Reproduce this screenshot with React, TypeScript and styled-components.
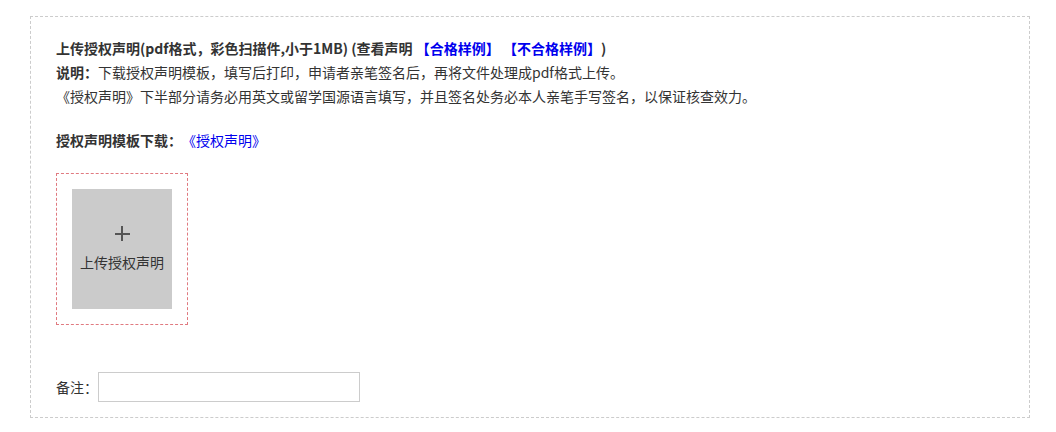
import React from "react";
import styled, { createGlobalStyle } from "styled-components";

const Global = createGlobalStyle`
  html, body { margin: 0; padding: 0; background: #fff; }
  body {
    font-family: "Noto Sans CJK SC", "Noto Sans", sans-serif;
    color: #333;
    text-spacing-trim: space-all;
  }
`;

const Page = styled.div`
  padding: 16px 0 0 30px;
`;

const Panel = styled.div`
  width: 1000px;
  height: 402px;
  box-sizing: border-box;
  border: 1px dashed #ccc;
  padding: 19px 25px 0 25px;
`;

const Intro = styled.div`
  font-size: 14px;
  line-height: 24px;
`;

const Line = styled.div<{ $bold?: boolean }>`
  font-weight: ${(p) => (p.$bold ? 700 : 400)};
  white-space: nowrap;
`;

const Strong = styled.span`
  font-weight: 700;
`;

const Link = styled.a<{ $bold?: boolean }>`
  color: #0000ee;
  text-decoration: none;
  font-weight: ${(p) => (p.$bold ? 700 : 400)};
`;

const Download = styled.div`
  margin-top: 20px;
  font-size: 14px;
  line-height: 24px;
`;

const UploadFrame = styled.div`
  margin-top: 21px;
  width: 132px;
  height: 152px;
  box-sizing: border-box;
  border: 1px dashed #e07a80;
  padding: 15px;
`;

const UploadTile = styled.div`
  width: 100px;
  height: 120px;
  background: #cbcbcb;
  display: flex;
  flex-direction: column;
  align-items: center;
  cursor: pointer;
`;

const Plus = styled.span`
  position: relative;
  width: 15px;
  height: 15px;
  margin-top: 37px;
  &::before,
  &::after {
    content: "";
    position: absolute;
    background: #555;
  }
  &::before {
    left: 0;
    right: 0;
    top: 6.5px;
    height: 2px;
  }
  &::after {
    top: 0;
    bottom: 0;
    left: 6.5px;
    width: 2px;
  }
`;

const TileLabel = styled.span`
  margin-top: 11px;
  font-size: 14px;
  line-height: 20px;
  color: #333;
`;

const RemarkRow = styled.div`
  margin-top: 47px;
  display: flex;
  align-items: center;
  font-size: 14px;
`;

const RemarkInput = styled.input`
  width: 262px;
  height: 30px;
  box-sizing: border-box;
  border: 1px solid #ccc;
  outline: none;
  padding: 0 6px;
  font-family: inherit;
  font-size: 14px;
`;

export default function App() {
  return (
    <>
      <Global />
      <Page>
        <Panel>
          <Intro>
            <Line $bold>
              上传授权声明(pdf格式，彩色扫描件,小于1MB) (查看声明{" "}
              <Link $bold href="#">【合格样例】</Link>{" "}
              <Link $bold href="#">【不合格样例】</Link>)
            </Line>
            <Line>
              <Strong>说明：</Strong>下载授权声明模板，填写后打印，申请者亲笔签名后，再将文件处理成pdf格式上传。
            </Line>
            <Line>
              《授权声明》下半部分请务必用英文或留学国源语言填写，并且签名处务必本人亲笔手写签名，以保证核查效力。
            </Line>
          </Intro>
          <Download>
            <Strong>授权声明模板下载：</Strong>
            <Link href="#">《授权声明》</Link>
          </Download>
          <UploadFrame>
            <UploadTile>
              <Plus />
              <TileLabel>上传授权声明</TileLabel>
            </UploadTile>
          </UploadFrame>
          <RemarkRow>
            <span>备注：</span>
            <RemarkInput type="text" />
          </RemarkRow>
        </Panel>
      </Page>
    </>
  );
}
